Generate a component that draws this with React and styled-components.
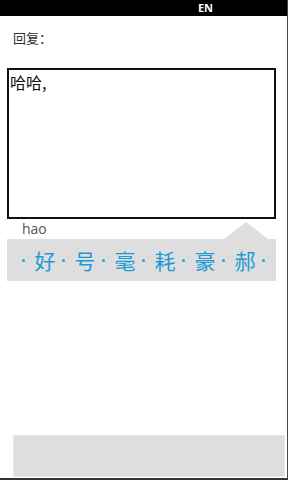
import React from "react";
import styled, { createGlobalStyle } from "styled-components";

const Global = createGlobalStyle`
  html, body { margin: 0; padding: 0; background: #fff; }
  #root { width: 288px; height: 480px; }
  * { box-sizing: border-box; }
`;

const Screen = styled.div`
  width: 288px;
  height: 480px;
  display: flex;
  flex-direction: column;
  background: #fff;
  border-right: 1px solid #4a4a4a;
  border-bottom: 2px solid #333;
  font-family: "Noto Sans", "Noto Sans CJK SC", sans-serif;
  overflow: hidden;
`;

const StatusBar = styled.div`
  height: 16px;
  background: #000;
  display: flex;
  align-items: center;
  justify-content: flex-end;
  padding-right: 75px;
  margin-right: -1px;
`;

const Lang = styled.span`
  color: #fff;
  font-weight: 700;
  font-size: 11px;
  line-height: 16px;
  font-family: "Open Sans", "Noto Sans", sans-serif;
`;

const Label = styled.div`
  margin: 14px 0 0 13px;
  font-size: 13px;
  line-height: 16px;
  color: #333;
  font-family: "Noto Sans CJK SC", sans-serif;
`;

const TextBox = styled.div`
  margin: 22px 0 0 7px;
  width: 269px;
  height: 151px;
  border: 2px solid #111;
  padding: 2px 0 0 1px;
  font-size: 16px;
  line-height: 20px;
  color: #111;
  font-family: "Noto Sans CJK SC", sans-serif;
`;

const HintRow = styled.div`
  display: flex;
  justify-content: space-between;
  align-items: flex-end;
  margin: 0 0 0 7px;
  width: 269px;
  height: 20px;
`;

const Pinyin = styled.span`
  margin-left: 15px;
  margin-bottom: 2px;
  font-size: 14px;
  line-height: 17px;
  color: #555;
  font-family: "Open Sans", "Noto Sans", sans-serif;
`;

const Pointer = styled.div`
  width: 44px;
  height: 17px;
  margin-right: 8px;
  background: #dedede;
  clip-path: polygon(0 100%, 50% 0, 100% 100%);
`;

const CandidateBar = styled.div`
  margin-left: 7px;
  width: 269px;
  height: 42px;
  background: #dedede;
  display: flex;
  align-items: center;
  padding-left: 6px;
  color: #1e9ad6;
  font-family: "Noto Sans CJK SC", sans-serif;
`;

const Dot = styled.span`
  width: 20px;
  display: flex;
  justify-content: center;
  align-items: center;
  &::before {
    content: "";
    width: 3px;
    height: 3px;
    border-radius: 50%;
    background: #1e9ad6;
  }
`;

const Candidate = styled.span`
  width: 20px;
  display: flex;
  justify-content: center;
  padding-left: 4px;
  font-size: 21px;
  line-height: 24px;
  white-space: nowrap;
`;

const BottomBox = styled.div`
  margin: auto 2px 1px 13px;
  height: 42px;
  background: #dedede;
  border: 1px solid #e9e9e9;
`;

const words = ["好", "号", "毫", "耗", "豪", "郝"];

export default function App() {
  return (
    <>
      <Global />
      <Screen>
        <StatusBar>
          <Lang>EN</Lang>
        </StatusBar>
        <Label>回复：</Label>
        <TextBox>哈哈,</TextBox>
        <HintRow>
          <Pinyin>hao</Pinyin>
          <Pointer />
        </HintRow>
        <CandidateBar>
          {words.map((w) => (
            <React.Fragment key={w}>
              <Dot />
              <Candidate>{w}</Candidate>
            </React.Fragment>
          ))}
          <Dot />
        </CandidateBar>
        <BottomBox />
      </Screen>
    </>
  );
}
